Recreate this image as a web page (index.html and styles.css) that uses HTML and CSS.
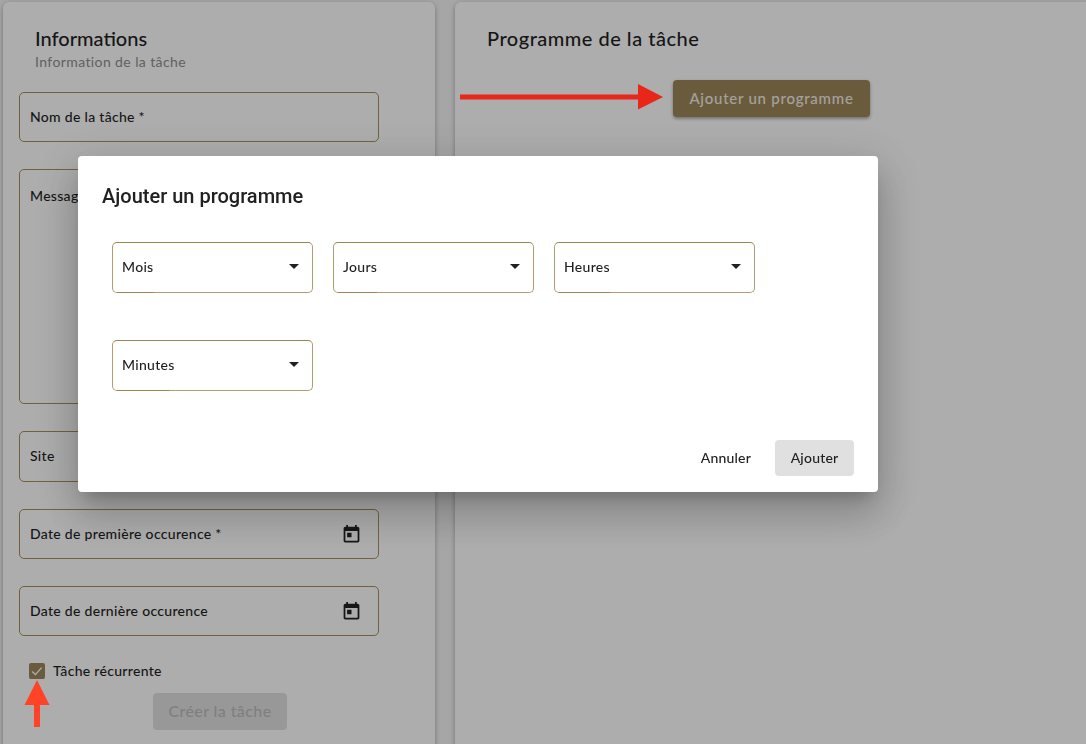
FILE: index.html
```html
<!DOCTYPE html>
<html lang="fr">
<head>
<meta charset="utf-8">
<title>Tâche</title>
<link rel="stylesheet" href="styles.css">
</head>
<body>
<main class="page">
  <section class="card card-left">
    <header class="card-head">
      <h2 class="card-title">Informations</h2>
      <p class="card-sub">Information de la tâche</p>
    </header>
    <div class="fields">
      <div class="field"><span class="field-label">Nom de la tâche *</span></div>
      <div class="field field-area"><span class="field-label">Message</span></div>
      <div class="field"><span class="field-label">Site</span></div>
      <div class="field">
        <span class="field-label">Date de première occurence *</span>
        <svg class="field-icon" viewBox="0 0 24 24"><path d="M19 3h-1V1h-2v2H8V1H6v2H5c-1.11 0-1.99.9-1.99 2L3 19c0 1.1.89 2 2 2h14c1.1 0 2-.9 2-2V5c0-1.1-.9-2-2-2zm0 16H5V8h14v11zM7 10h5v5H7z"/></svg>
      </div>
      <div class="field">
        <span class="field-label">Date de dernière occurence</span>
        <svg class="field-icon" viewBox="0 0 24 24"><path d="M19 3h-1V1h-2v2H8V1H6v2H5c-1.11 0-1.99.9-1.99 2L3 19c0 1.1.89 2 2 2h14c1.1 0 2-.9 2-2V5c0-1.1-.9-2-2-2zm0 16H5V8h14v11zM7 10h5v5H7z"/></svg>
      </div>
    </div>
    <div class="check-row">
      <span class="check-box"><svg viewBox="0 0 16 16"><path d="M3.200 8.400l3.200 3.200 6.200-7" fill="none" stroke="#fff" stroke-width="1.400"/></svg></span>
      <span class="check-label">Tâche récurrente</span>
    </div>
    <div class="submit-row"><button class="btn-disabled">Créer la tâche</button></div>
  </section>
  <section class="card card-right">
    <h2 class="card-title card-title-wide">Programme de la tâche</h2>
    <div class="add-row"><button class="btn-primary">Ajouter un programme</button></div>
  </section>
</main>

<div class="overlay">
  <div class="dialog">
    <h1 class="dialog-title">Ajouter un programme</h1>
    <div class="selects">
      <div class="select"><span class="field-label select-label">Mois</span><i class="caret"></i></div>
      <div class="select"><span class="field-label select-label">Jours</span><i class="caret"></i></div>
      <div class="select"><span class="field-label select-label">Heures</span><i class="caret"></i></div>
      <div class="select"><span class="field-label select-label">Minutes</span><i class="caret"></i></div>
    </div>
    <div class="dialog-actions">
      <button class="btn-text">Annuler</button>
      <button class="btn-grey">Ajouter</button>
    </div>
  </div>
</div>

<svg class="arrow arrow-right" viewBox="0 0 204 26"><path d="M0 10.500h178V0l25 13-25 12.500V15.500H0z"/></svg>
<svg class="arrow arrow-up" viewBox="0 0 26 48"><path d="M13 0l12.500 25H16v22h-6V25H.5z"/></svg>
</body>
</html>
```
FILE: styles.css
```css
* { box-sizing: border-box; }
html, body { margin: 0; height: 744px; overflow: hidden; }
body { background: #f5f5f5; font-family: "Lato", "Liberation Sans", sans-serif; color: #212121; }

.page { display: flex; gap: 20px; padding: 2px 0 0 3px; height: 744px; }
.card { background: #fff; border-radius: 6px 6px 0 0; box-shadow: 0 2px 4px rgba(0,0,0,.2), 0 1px 6px rgba(0,0,0,.14); height: 750px; }
.card-left { width: 432px; padding: 24px 0 0 16px; }
.card-right { flex: 1; padding: 24px 0 0 32px; margin-right: -8px; }

.card-head { padding-left: 16px; }
.card-title { margin: 0; font-size: 20px; line-height: 24px; font-weight: 500; letter-spacing: 0; color: #1f1f1f; }
.card-title-wide { letter-spacing: .5px; }
.card-sub { margin: 3px 0 0; font-size: 14px; line-height: 18px; font-weight: 400; color: #8f8f8f; letter-spacing: .4px; }

.fields { display: flex; flex-direction: column; gap: 27px; margin-top: 21px; width: 360px; }
.field { display: flex; align-items: center; justify-content: space-between; height: 50px; padding: 0 16px 0 10px; border: 1px solid #a8905b; border-radius: 5px; }
.field:nth-child(3) { height: 51px; padding-bottom: 1px; }
.field-area { height: 235px; align-items: flex-start; padding-top: 17px; }
.field-label { font-size: 14px; line-height: 18px; font-weight: 500; letter-spacing: .3px; color: #1f1f1f; }
.field-icon { width: 21px; height: 21px; fill: #212121; display: block; }

.check-row { display: flex; align-items: center; gap: 8px; margin: 27px 0 0 10px; }
.check-box { width: 16px; height: 16px; background: #9c875a; border-radius: 2px; display: block; }
.check-box svg { display: block; width: 16px; height: 16px; }
.check-label { font-size: 14px; line-height: 16px; font-weight: 500; letter-spacing: .3px; color: #1f1f1f; }

.submit-row { display: flex; margin: 14px 0 0 134px; }
.btn-disabled { width: 134px; height: 37px; padding: 0 0 2px; border: 0; border-radius: 4px; background: #e0e0e0; color: #bcbcbc; font: 500 16px/1 "Lato", sans-serif; letter-spacing: .4px; }

.add-row { margin-top: 30px; padding-left: 186px; }
.btn-primary { width: 197px; height: 37px; border: 0; border-radius: 4px; background: #9c875a; color: #f2eee6; font: 500 15px/1 "Lato", sans-serif; letter-spacing: .75px; box-shadow: 0 2px 3px rgba(0,0,0,.25), 0 1px 4px rgba(0,0,0,.12); }

.overlay { position: fixed; inset: 0; background: rgba(0,0,0,.32); padding: 156px 0 0 78px; }
.dialog { width: 800px; height: 336px; background: #fff; border-radius: 4px; padding: 24px 24px 16px; display: flex; flex-direction: column; box-shadow: 0 11px 15px -7px rgba(0,0,0,.2), 0 24px 38px 3px rgba(0,0,0,.14), 0 9px 46px 8px rgba(0,0,0,.12); }
.dialog-title { margin: 0; font: 500 20px/32px "Roboto", sans-serif; color: #212121; }
.selects { display: flex; flex-wrap: wrap; gap: 47px 20px; margin: 30px 0 0 10px; width: 660px; }
.select { width: 201px; height: 51px; display: flex; align-items: center; justify-content: space-between; padding: 0 13px 0 9px; border: 1px solid #b09c70; border-top-color: #9c8650; border-radius: 5px; }
.select-label { position: relative; top: -1px; }
.select-label::after { content: ""; position: absolute; left: -5px; right: 0; bottom: -17.500px; height: 1px; background: #9c8650; }
.select:last-child .select-label::after { right: 6px; }
.caret { width: 0; height: 0; border-left: 5px solid transparent; border-right: 5px solid transparent; border-top: 5px solid #212121; margin-top: -2px; }
.dialog-actions { display: flex; justify-content: flex-end; align-items: center; gap: 8px; margin-top: auto; }
.btn-text { height: 36px; padding: 0 16px; border: 0; background: none; color: #212121; font: 500 14px/1 "Lato", sans-serif; letter-spacing: .2px; }
.btn-grey { width: 79px; height: 36px; border: 0; border-radius: 4px; background: #e0e0e0; color: #212121; font: 500 14px/1 "Lato", sans-serif; letter-spacing: .2px; }

.arrow { position: fixed; display: block; }
.arrow-right { left: 460px; top: 84px; width: 204px; height: 26px; fill: #e8261a; }
.arrow-up { left: 24px; top: 680px; width: 26px; height: 48px; fill: #ff4326; }
```
